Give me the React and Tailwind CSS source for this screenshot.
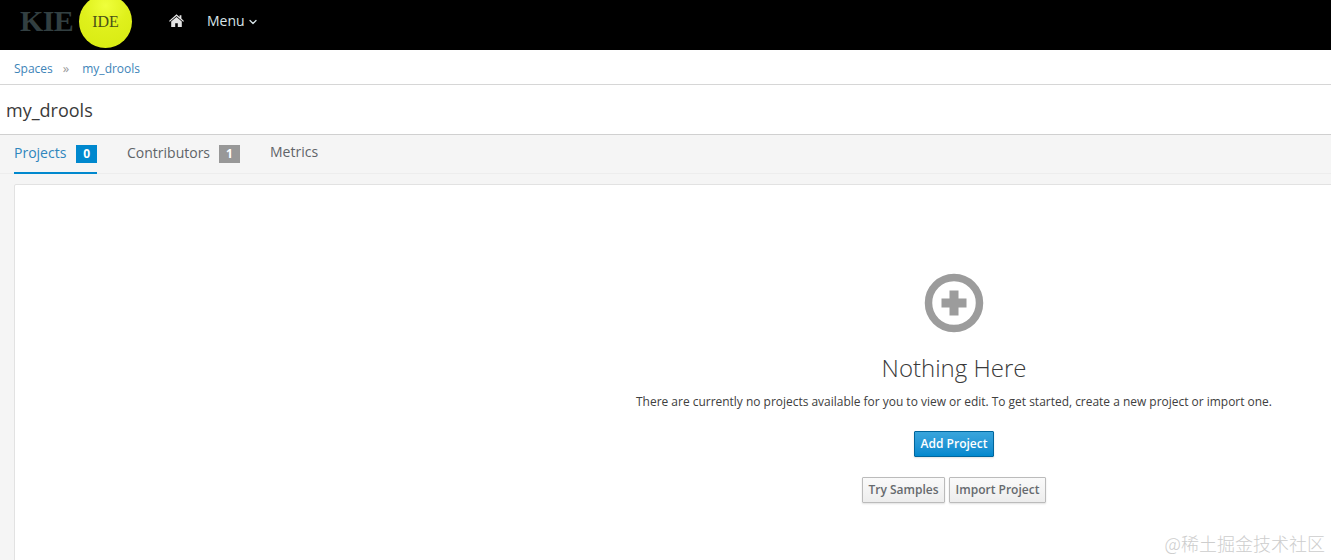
// App.jsx
import React from "react";
import { ChevronDown } from "lucide-react";

const Logo = () => (
  <div className="flex items-center ml-[19px] w-[114px] h-[50px] relative">
    <span className="text-[30px] leading-none font-bold tracking-[-0.6px] text-[#323f41] font-['Liberation_Serif',serif] mt-[-8px] ml-[1px]">
      KIE
    </span>
    {/* Yellow ball */}
    <div className="absolute left-[60px] top-[-5px] w-[53px] h-[53px] rounded-full bg-[radial-gradient(circle_at_50%_20%,#efff3c_0%,#dff01c_45%,#d7ea10_100%)] flex items-center justify-center">
      <span className="text-[16px] leading-none text-[#4a5216] font-['Liberation_Serif',serif] mt-[1px]">IDE</span>
    </div>
  </div>
);

const HomeIcon = () => (
  <svg width="15" height="13" viewBox="0 0 15 13" className="text-[#e4e4e4]">
    <path
      fill="currentColor"
      d="M7.5 0.3 L10.6 3 V1.2 H12.4 V4.6 L15 6.9 L14.2 7.7 L7.5 1.9 L0.8 7.7 L0 6.9 Z M2.2 7.6 L7.5 3.1 L12.8 7.6 V13 H8.8 V9.2 H6.2 V13 H2.2 Z"
    />
  </svg>
);

const PlusCircle = () => (
  <svg width="60" height="60" viewBox="0 0 60 60">
    <circle cx="30" cy="30" r="25.5" fill="none" stroke="#9c9c9c" strokeWidth="7.5" />
    <path fill="#9c9c9c" d="M25.5 17.5 h9 v8 h8 v9 h-8 v8 h-9 v-8 h-8 v-9 h8 Z" />
  </svg>
);

const Badge = ({ className, children }) => (
  <span className={`w-[21px] h-[18px] flex items-center justify-center text-white text-[12px] font-bold ${className}`}>
    {children}
  </span>
);

export default function App() {
  return (
    <div className="relative w-[1331px] h-[560px] overflow-hidden bg-[#f5f5f5] font-['Open_Sans',sans-serif] text-[#363636]">
      {/* Top nav */}
      <header className="h-[50px] bg-black flex items-center">
        <Logo />
        <div className="ml-[36px] mt-[-9px] flex items-center">
          <HomeIcon />
        </div>
        <div className="ml-[23px] mt-[-9px] flex items-center text-[14px] text-[#d8e4e8]">
          Menu
          <ChevronDown size={12} strokeWidth={2.5} className="ml-[2px] mt-[2px]" />
        </div>
      </header>

      {/* Breadcrumb */}
      <nav className="h-[35px] bg-white border-b border-[#d6d6d6] pl-[14px] pt-[4px] flex items-center text-[12px] text-[#3d84b8]">
        <span>Spaces</span>
        <span className="ml-[10px] text-[#9a9a9a] text-[13px]">»</span>
        <span className="ml-[13px]">my_drools</span>
      </nav>

      {/* Title */}
      <div className="h-[50px] bg-white border-b border-[#d0d0d0] pl-[6px] pt-[2px] flex items-center text-[18px] text-[#3a3a3a]">
        my_drools
      </div>

      {/* Tabs */}
      <div className="h-[39px] pl-[14px] flex border-b border-[#ededed] text-[14px]">
        <div className="w-[83px] h-[39px] border-b-2 border-[#0088ce] flex items-start pt-[7px] text-[#2f86bd]">
          Projects
          <Badge className="ml-[10px] mt-[3px] bg-[#0088ce]">0</Badge>
        </div>
        <div className="ml-[30px] flex items-start pt-[7px] text-[#5f6468]">
          Contributors
          <Badge className="ml-[9px] mt-[3px] bg-[#989898]">1</Badge>
        </div>
        <div className="ml-[30px] pt-[6px] text-[#5f6468]">Metrics</div>
      </div>

      {/* Card, wider than the window */}
      <main className="ml-[14px] mt-[10px] w-[1880px] h-[400px] bg-white border border-[#e2e2e2] rounded-[2px] flex flex-col items-center pt-[88px]">
        <PlusCircle />
        <h2 className="mt-[18px] text-[24px] leading-[33px] font-light text-[#3a3a3a]">Nothing Here</h2>
        <p className="mt-[9px] text-[11.96px] leading-[17px] text-[#404040]">
          There are currently no projects available for you to view or edit. To get started, create a new project or
          import one.
        </p>
        <button className="mt-[21px] w-[80px] h-[26px] rounded-[1px] border border-[#00659c] bg-gradient-to-b from-[#39a5dc] to-[#0088ce] text-white text-[12px] font-semibold shadow-[0_1px_2px_rgba(0,0,0,0.12)]">
          Add Project
        </button>
        <div className="mt-[20px] flex gap-[4px]">
          <button className="w-[83px] h-[26px] rounded-[1px] border border-[#bbb] bg-gradient-to-b from-[#fafafa] to-[#ededed] text-[12px] text-[#666a6e] font-semibold shadow-[0_1px_2px_rgba(0,0,0,0.12)]">
            Try Samples
          </button>
          <button className="w-[97px] h-[26px] rounded-[1px] border border-[#bbb] bg-gradient-to-b from-[#fafafa] to-[#ededed] text-[12px] text-[#666a6e] font-semibold shadow-[0_1px_2px_rgba(0,0,0,0.12)]">
            Import Project
          </button>
        </div>
      </main>

      {/* Watermark */}
      <div className="absolute right-[6px] bottom-[5px] text-[18px] leading-[24px] font-light text-[#cdcdcd] font-['Noto_Sans_CJK_SC',sans-serif]">
        @稀土掘金技术社区
      </div>
    </div>
  );
}
